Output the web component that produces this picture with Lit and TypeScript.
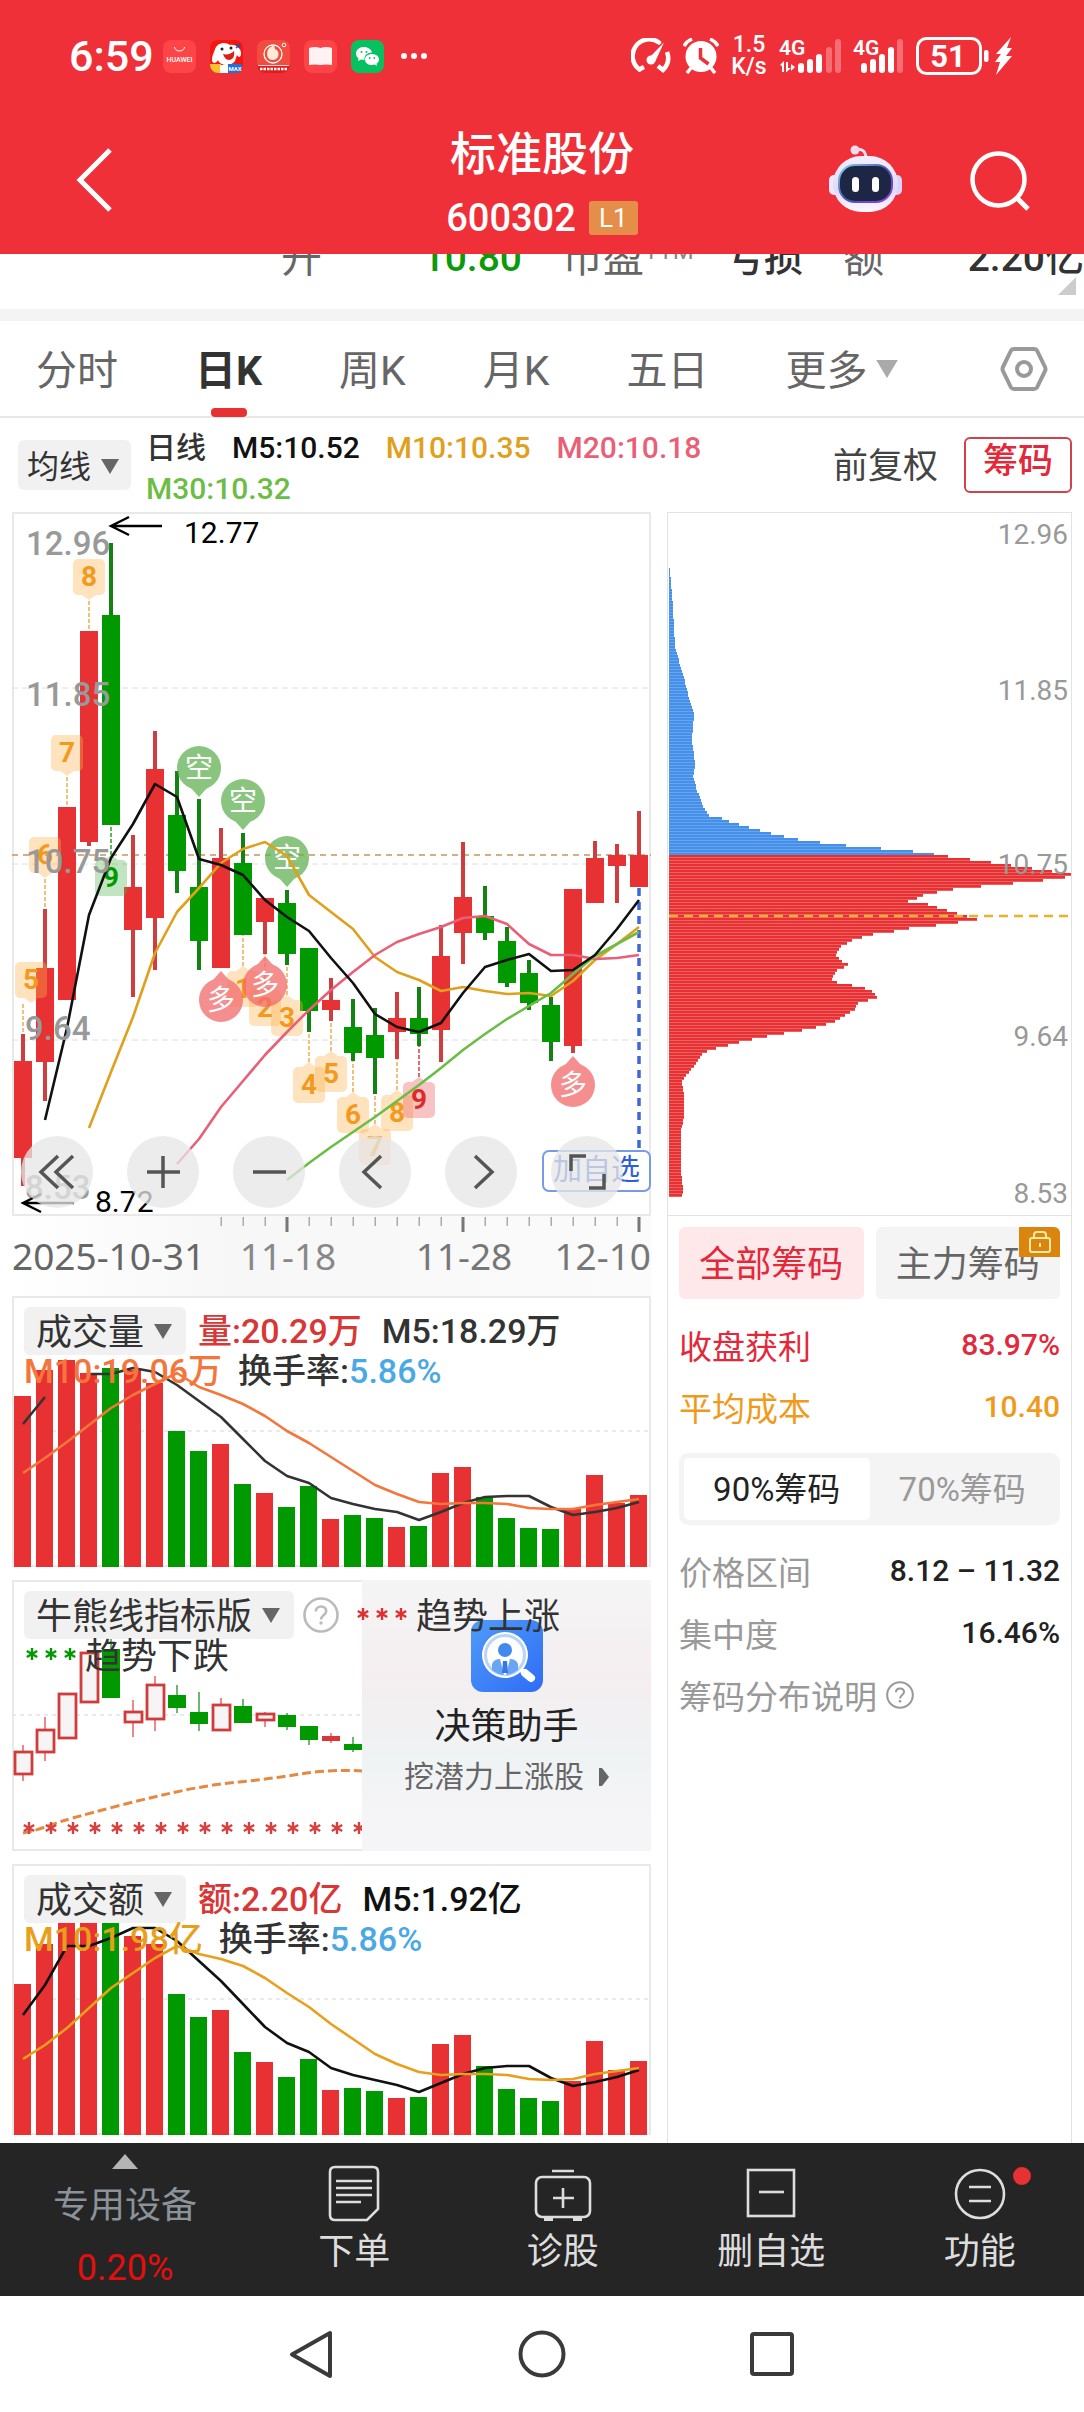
import { LitElement, html, svg, css, nothing } from "lit";
import { customElement, state } from "lit/decorators.js";

const RED = "#e73132";
const GREEN = "#009900";
const STEP = 22;
const cx = (i: number) => 11 + i * STEP;

type Candle = ["r" | "g", number, number, number, number];

// Each entry: direction, high, body top, body bottom, low.
const CANDLES: Candle[] = [
  ["r", 522, 549, 646, 674], ["r", 397, 456, 550, 589], ["r", 295, 295, 488, 488],
  ["r", 119, 119, 330, 334], ["g", 31, 103, 313, 313], ["r", 323, 375, 418, 485],
  ["r", 219, 257, 406, 458], ["g", 259, 303, 359, 381], ["g", 287, 375, 429, 458],
  ["r", 316, 346, 456, 456], ["g", 321, 351, 423, 423], ["r", 386, 386, 410, 442],
  ["g", 378, 391, 442, 453], ["g", 436, 436, 499, 520], ["r", 466, 488, 498, 509],
  ["g", 487, 515, 541, 549], ["g", 496, 523, 546, 582], ["r", 480, 506, 520, 547],
  ["g", 475, 506, 522, 534], ["r", 413, 444, 518, 550], ["r", 330, 385, 421, 452],
  ["g", 374, 404, 421, 428], ["g", 415, 429, 471, 475], ["g", 448, 461, 491, 498],
  ["g", 485, 493, 530, 549], ["r", 377, 377, 534, 541], ["r", 329, 346, 391, 391],
  ["r", 332, 343, 354, 391], ["r", 299, 343, 375, 375],
];

const AVERAGES = [
  { color: "#e0a01c", from: 3, ys: [616, 560, 505, 441, 400, 376, 351, 337, 330, 344, 383, 400, 417, 445, 460, 468, 479, 475, 479, 482, 481, 484, 469, 448, 432, 415] },
  { color: "#ea5f78", from: 7, ys: [652, 627, 595, 569, 543, 520, 498, 478, 460, 443, 430, 422, 415, 406, 404, 412, 432, 443, 443, 447, 446, 443] },
  { color: "#6cbd45", from: 12, ys: [668, 651, 635, 620, 605, 589, 573, 556, 538, 522, 507, 494, 481, 462, 444, 432, 420] },
  { color: "#111111", from: 1, ys: [608, 516, 403, 346, 312, 272, 285, 347, 353, 363, 388, 405, 419, 446, 471, 502, 515, 520, 511, 481, 455, 448, 442, 459, 458, 443, 417, 388] },
];

interface Tag { n: string; x: number; y: number; end: number; tone: "o" | "g" | "r"; dx?: number }
const TAGS_ABOVE: Tag[] = [
  { n: "5", x: cx(0), y: 450, end: 522, tone: "o", dx: 8 },
  { n: "6", x: cx(1), y: 325, end: 397, tone: "o" },
  { n: "7", x: cx(2), y: 223, end: 295, tone: "o" },
  { n: "8", x: cx(3), y: 47, end: 119, tone: "o" },
];
const TAGS_BELOW: Tag[] = [
  { n: "9", x: cx(4), y: 348, end: 313, tone: "g" },
  { n: "1", x: cx(10), y: 459, end: 423, tone: "o" },
  { n: "2", x: cx(11), y: 478, end: 442, tone: "o" },
  { n: "3", x: cx(12), y: 488, end: 453, tone: "o" },
  { n: "4", x: cx(13), y: 555, end: 520, tone: "o" },
  { n: "5", x: cx(14), y: 544, end: 509, tone: "o" },
  { n: "6", x: cx(15), y: 585, end: 549, tone: "o" },
  { n: "7", x: cx(16), y: 617, end: 582, tone: "o" },
  { n: "8", x: cx(17), y: 583, end: 547, tone: "o" },
  { n: "9", x: cx(18), y: 570, end: 534, tone: "r" },
];
const TONES = {
  o: { fill: "#fbb24a", text: "#f39a1e", dash: "#efc27c" },
  g: { fill: "#4fb84f", text: "#009900", dash: "#5cb85c" },
  r: { fill: "#ec5a5a", text: "#dd2b2b", dash: "#e26a6a" },
};

interface Flag { label: string; x: number; y: number; up: boolean }
const FLAGS: Flag[] = [
  { label: "空", x: cx(8), y: 256, up: false },
  { label: "空", x: cx(10), y: 289, up: false },
  { label: "空", x: cx(12), y: 346, up: false },
  { label: "多", x: cx(9), y: 488, up: true },
  { label: "多", x: cx(11), y: 473, up: true },
  { label: "多", x: cx(25), y: 573, up: true },
];

// Chip distribution outline as [y, width] pairs.
const CHIPS: [number, number][] = [
  [50, 0], [80, 3], [134, 6], [144, 9], [165, 15], [185, 20], [201, 25], [227, 23], [251, 26], [263, 24],
  [277, 28], [293, 34], [302, 40], [304, 50], [308, 60], [311, 70], [314, 80], [317, 91], [320, 102], [323, 115],
  [326, 129], [328, 144], [331, 166], [334, 200], [337, 237], [340, 258], [343, 279], [346, 301], [349, 322],
  [352, 342], [355, 363], [358, 383], [361, 403], [364, 396], [368, 367], [371, 332], [374, 302], [376, 284],
  [379, 268], [382, 254], [386, 246], [388, 239], [391, 259], [394, 268], [397, 278], [400, 288], [403, 298],
  [406, 308], [410, 282], [413, 260], [415, 240], [419, 220], [421, 204], [425, 189], [427, 183], [431, 176],
  [433, 172], [437, 169], [443, 166], [445, 170], [449, 174], [452, 181], [454, 175], [457, 168], [463, 164],
  [467, 163], [470, 170], [472, 183], [476, 200], [479, 205], [482, 207], [485, 209], [488, 194], [491, 187],
  [497, 186], [500, 179], [503, 174], [506, 169], [509, 164], [512, 153], [515, 144], [518, 127], [521, 109],
  [524, 92], [527, 79], [530, 66], [533, 55], [536, 43], [539, 35], [545, 30], [554, 24], [566, 14], [569, 13],
  [580, 15], [603, 15], [617, 12], [658, 12], [677, 14], [685, 13],
];
const CLOSE_Y = 343;

function chipWidth(y: number): number {
  for (let i = 1; i < CHIPS.length; i++) {
    const [y0, w0] = CHIPS[i - 1];
    const [y1, w1] = CHIPS[i];
    if (y <= y1) return Math.round(w0 + ((w1 - w0) * (y - y0)) / (y1 - y0));
  }
  return 0;
}
function chipPath(from: number, to: number, offset: number, height: number): string {
  let d = "";
  for (let y = from; y < to; y += 3) {
    const w = chipWidth(y + 1);
    if (w > 0) d += `M1 ${y + offset}h${w}v${height}H1z`;
  }
  return d;
}

const SIDES = "rrrrgrrggrgrggrggrgrrggggrrrr";
const VOLUME = {
  tops: [100, 74, 64, 77, 72, 74, 87, 135, 155, 148, 188, 197, 211, 190, 223, 219, 222, 231, 230, 177, 171, 201, 222, 232, 233, 213, 179, 207, 199],
  lines: [
    { color: "#333333", from: 0, ys: [128, 101] },
    { color: "#333333", from: 3, ys: [78, 78, 72, 76, 89, 105, 121, 143, 165, 180, 187, 202, 208, 213, 216, 224, 216, 207, 201, 200, 200, 211, 219, 216, 212, 206] },
    { color: "#f4763c", from: 0, ys: [177, 162, 146, 129, 112, 99, 88, 77, 91, 99, 108, 120, 135, 147, 161, 175, 189, 198, 206, 208, 207, 207, 208, 212, 213, 213, 209, 206, 203] },
  ],
};
const TURNOVER = {
  tops: [120, 80, 59, 54, 54, 72, 80, 130, 153, 146, 188, 198, 213, 195, 226, 224, 227, 234, 233, 180, 171, 202, 225, 234, 237, 217, 177, 206, 197],
  lines: [
    { color: "#111111", from: 0, ys: [151, 121, 82, 82, 74, 64, 64, 77, 97, 117, 140, 163, 179, 188, 204, 211, 216, 221, 228, 219, 210, 204, 202, 202, 214, 222, 218, 213, 206] },
    { color: "#e8a01c", from: 0, ys: [195, 181, 164, 144, 124, 109, 94, 82, 90, 95, 102, 114, 129, 143, 160, 175, 190, 200, 208, 211, 210, 210, 211, 215, 216, 215, 210, 207, 204] },
  ],
};

const TREND: Candle[] = [
  ["r", 165, 171, 195, 201], ["r", 137, 149, 173, 181], ["r", 113, 113, 159, 159], ["r", 72, 72, 123, 123],
  ["g", 54, 69, 118, 118], ["r", 120, 131, 143, 157], ["r", 96, 104, 140, 151], ["g", 105, 115, 128, 133],
  ["g", 112, 132, 144, 151], ["r", 118, 124, 151, 151], ["g", 119, 126, 143, 143], ["r", 132, 133, 141, 147],
  ["g", 133, 135, 147, 150], ["g", 146, 146, 160, 165], ["r", 153, 156, 161, 163], ["g", 157, 164, 170, 172],
];

const points = (from: number, ys: number[]) => ys.map((y, i) => `${cx(from + i)},${y}`).join(" ");
const line = (l: { color: string; from: number; ys: number[] }) =>
  svg`<polyline points=${points(l.from, l.ys)} fill="none" stroke=${l.color} stroke-width="2.6" stroke-linejoin="round" />`;
const star = (x: number, y: number, r: number, color: string) => {
  const a = Math.round(r * 8.7) / 10;
  const b = r / 2;
  return svg`<path d="M${x} ${y - r}v${2 * r}M${x - a} ${y - b}l${2 * a} ${2 * b}M${x - a} ${y + b}l${2 * a} ${-2 * b}" stroke=${color} stroke-width="2.4" />`;
};
const caret = html`<svg class="caret" viewBox="0 0 18 15" aria-hidden="true"><path d="M0 0h18L9 15z" fill="currentColor" /></svg>`;
const help = html`<svg viewBox="0 0 36 36" fill="none" stroke="currentColor" aria-hidden="true">
  <circle cx="18" cy="18" r="16.5" stroke-width="2.6" />
  <path d="M12.8 14.5c0-3 2.2-5 5.2-5s5.2 1.9 5.2 4.7c0 3.6-5.2 3.9-5.2 8.3" stroke-width="2.6" />
  <circle cx="18" cy="26" r="1.7" fill="currentColor" stroke="none" />
</svg>`;
const legendStars = (color: string) => html`<svg class="stars" viewBox="0 0 52 16" aria-hidden="true">
  ${[7, 26, 45].map((x) => star(x, 8, 6, color))}
</svg>`;

@customElement("app-root")
export class AppRoot extends LitElement {
  @state() private period = "日K";
  @state() private chipScope = "全部筹码";
  @state() private chipShare = "90%筹码";

  static styles = css`
    :host {
      display: block;
      min-height: 100vh;
      background: #fff;
      color: #333;
      font-family: Roboto, "Noto Sans CJK SC", sans-serif;
      font-size: 34px;
    }
    * { box-sizing: border-box; }
    button {
      margin: 0; padding: 0; border: 0; background: none;
      font: inherit; color: inherit; cursor: pointer;
    }
    a { color: inherit; text-decoration: none; }
    svg { display: block; flex: none; }
    svg text { font-family: Roboto, "Noto Sans CJK SC", sans-serif; }
    svg .date { font-family: "Noto Sans", "Noto Sans CJK SC", sans-serif; }
    .caret { width: 18px; height: 15px; margin-top: 5px; color: #666; }

    .black { color: #111; }
    .dark { color: #333; }
    .red { color: #d93636; }
    .gold { color: #e0a01c; }
    .amber { color: #e8a01c; }
    .orange { color: #f4763c; }
    .pink { color: #ea5f78; }
    .lime { color: #6cbd45; }
    .sky { color: #4aa9e4; }

    .top { background: #f03038; color: #fff; height: 254px; display: flex; flex-direction: column; }
    .status { display: flex; align-items: center; height: 112px; padding: 0 72px 0 69px; }
    .clock { font-size: 43px; font-weight: 500; width: 94px; }
    .apps { display: flex; gap: 14px; align-items: center; }
    .app { width: 33px; height: 33px; }
    .dots { width: 30px; height: 10px; margin-left: 1px; }
    .signals { margin-left: auto; display: flex; align-items: center; gap: 12px; }
    .speed { font-size: 23px; line-height: 22px; text-align: center; font-weight: 500; width: 36px; }
    .gauge { width: 40px; height: 36px; }
    .alarm { width: 36px; height: 36px; }
    .signal1 { width: 62px; height: 36px; overflow: visible; }
    .signal2 { width: 51px; height: 36px; overflow: visible; }
    .battery { width: 96px; height: 38px; }

    .title-bar { flex: 1; display: grid; grid-template-columns: 1fr auto 1fr; padding: 0 54px 0 76px; }
    .back { justify-self: start; width: 36px; height: 64px; margin-top: 36px; }
    .back svg { width: 36px; height: 64px; }
    .stock { text-align: center; margin-left: -22px; }
    .name { margin: 0; font-size: 46px; line-height: 64px; padding-top: 10px; font-weight: 500; }
    .code { display: flex; justify-content: center; align-items: center; gap: 13px; font-size: 38px; line-height: 64px; font-weight: 500; }
    .level { background: #e58e4a; border-radius: 3px; font-size: 26px; line-height: 34px; width: 49px; font-weight: 400; }
    .actions { justify-self: end; display: flex; gap: 68px; margin-top: 33px; height: 68px; }
    .robot { width: 73px; height: 68px; }
    .search { width: 60px; height: 60px; margin-top: 6px; }
    .search svg { width: 60px; height: 60px; }

    .quotes {
      position: relative; height: 55px; overflow: hidden; padding: 0 0 26px 281px;
      display: grid; grid-template-columns: repeat(3, minmax(0, 1fr)); gap: 40px; align-content: end;
      font-size: 39px; line-height: 50px; color: #666;
    }
    .quotes div { display: flex; justify-content: space-between; white-space: nowrap; }
    .quotes b { font-weight: 500; color: #333; }
    .quotes .down { color: #0a9a0a; }
    .quotes sup { font-size: 24px; line-height: 20px; color: #888; vertical-align: 13px; }
    .quotes .label { font-size: 41px; }
    .corner { position: absolute; right: 8px; bottom: 14px; width: 18px; height: 18px; }
    .band { height: 12px; background: #f4f4f4; }

    .tabs { display: flex; align-items: center; gap: 77px; height: 97px; padding: 0 36px; border-bottom: 2px solid #e8e8e8; }
    .tab { display: flex; align-items: center; gap: 8px; height: 100%; padding-bottom: 4px; font-size: 41px; color: #666; position: relative; white-space: nowrap; }
    .tab.on { color: #333; font-weight: 700; }
    .tab.on::after {
      content: ""; position: absolute; left: 0; right: 0; bottom: -1px; margin: 0 auto;
      width: 36px; height: 9px; border-radius: 4px; background: #e73132;
    }
    .tab .caret { width: 22px; height: 18px; margin-top: 4px; color: #aaa; }
    .settings { margin-left: auto; }
    .settings svg { width: 48px; height: 46px; }

    .legend-row { display: flex; align-items: center; height: 94px; padding: 0 12px 0 18px; }
    .pick { display: flex; align-items: center; gap: 10px; background: #f1f1f1; border-radius: 6px; white-space: nowrap; color: #333; padding-bottom: 3px; }
    .ma { height: 50px; padding-left: 9px; padding-right: 12px; font-size: 32px; }
    .ma-values { flex: 1; min-width: 0; display: flex; flex-wrap: wrap; column-gap: 26px; margin-left: 15px; font-size: 30px; line-height: 41px; padding-top: 5px; font-weight: 500; }
    .adjust { font-size: 35px; color: #444; margin-right: 26px; padding-bottom: 6px; }
    .chips-toggle { width: 108px; height: 56px; border: 2px solid #d0434c; border-radius: 6px; color: #e3283a; font-size: 35px; line-height: 46px; padding-bottom: 6px; font-weight: 500; }

    .main { display: grid; grid-template-columns: minmax(0, 639fr) minmax(0, 405fr); gap: 16px; padding: 0 12px; }
    .left { display: flex; flex-direction: column; padding-bottom: 8px; }
    .plot { width: 100%; height: auto; }
    .chart { display: grid; }
    .chart > * { grid-area: 1 / 1; }
    .tools { align-self: end; display: flex; justify-content: space-between; padding: 0 28px 8px 9px; }
    .tool { width: 72px; height: 72px; border-radius: 50%; background: rgba(230, 230, 230, 0.76); }
    .tool svg { width: 72px; height: 72px; }
    .add {
      align-self: end; justify-self: end; margin-bottom: 24px; width: 109px; height: 42px; border: 2px solid #7a9ae8;
      border-radius: 7px; color: #2f5fd8; font-size: 29px; line-height: 34px; padding-bottom: 2px; background: #fff;
    }
    .panels { display: flex; flex-direction: column; gap: 13px; }
    .panel { display: grid; }
    .panel > * { grid-area: 1 / 1; }
    .panel header { align-self: start; padding: 11px 0 0 12px; z-index: 1; }
    .row1 { display: flex; align-items: center; height: 48px; gap: 12px; white-space: nowrap; }
    .row1 .pick { height: 48px; padding: 0 14px 5px 12px; font-size: 36px; gap: 10px; }
    .row2 { display: flex; align-items: center; height: 32px; padding: 0 0 6px 0; white-space: nowrap; column-gap: 16px; }
    .values { display: flex; column-gap: 20px; padding-bottom: 5px; }
    .values, .row2 { font-weight: 500; }
    .trend { font-size: 36px; font-weight: 400; display: flex; align-items: center; gap: 8px; padding-bottom: 5px; }
    .stars { width: 52px; height: 16px; margin-top: 3px; }
    .help { color: #bbb; }
    .help svg { width: 36px; height: 36px; }
    .row1 .help { margin-left: -3px; }
    .help + .trend { margin-left: 5px; }
    .row2.low { height: 32px; padding: 0 0 0 1px; }
    .promo {
      justify-self: end; width: 45.2%; display: flex; flex-direction: column; align-items: center; padding-top: 40px;
      background: linear-gradient(#f5f5f6, #f4eef0 36%, #eff3f4 66%, #f5f4f7 86%);
    }
    .promo svg.logo { width: 72px; height: 72px; }
    .promo strong { font-weight: 400; font-size: 36px; line-height: 50px; color: #222; margin-top: 10px; }
    .promo span { display: flex; align-items: center; gap: 15px; font-size: 30px; line-height: 50px; color: #666; }
    .promo .play { width: 10px; height: 18px; }

    .right { border: solid #e2e2e2; border-width: 1px 1px 0; display: flex; flex-direction: column; }
    .right > svg { border-bottom: 1px solid #e2e2e2; }
    .chips { padding: 11px; font-size: 33px; }
    .scopes { display: grid; grid-template-columns: 1fr 1fr; gap: 12px; margin-bottom: 15px; }
    .scope { position: relative; height: 72px; padding-bottom: 4px; border-radius: 6px; background: #f4f4f4; color: #666; font-size: 36px; white-space: nowrap; }
    .scope.on { background: #ffe8ea; color: #e3283a; }
    .lock { position: absolute; right: 0; top: 0; width: 41px; height: 30px; }
    .rows { margin: 0; }
    .rows div, .note { display: flex; align-items: center; justify-content: space-between; height: 62px; color: #999; padding-bottom: 1px; }
    .rows dd { margin: 0; font-size: 30px; font-weight: 500; color: #222; }
    .rows .win, .rows .win dd { color: #e3283a; }
    .rows .avg, .rows .avg dd { color: #f09a1c; }
    .shares { display: grid; grid-template-columns: 1fr 1fr; height: 72px; padding: 5px; margin: 15px 0; border-radius: 9px; background: #f4f4f4; }
    .share { border-radius: 5px; color: #999; padding-bottom: 4px; }
    .share.on { background: #fff; color: #222; }
    .note { justify-content: flex-start; gap: 9px; }
    .note svg { width: 28px; height: 28px; }

    .bottom { display: grid; grid-template-columns: 6fr 5fr 5fr 5fr 5fr; height: 153px; background: #252525; color: #ddd; font-size: 36px; }
    .item { display: flex; flex-direction: column; align-items: center; padding-top: 22px; gap: 4px; line-height: 52px; white-space: nowrap; }
    .item svg { width: 58px; height: 57px; }
    .item.device { padding-top: 11px; color: #8a9399; gap: 0; line-height: 54px; }
    .item.device svg { width: 26px; height: 15px; margin-bottom: 10px; }
    .device em { font-style: normal; color: #e30f0f; line-height: 70px; }
    .icon-wrap { position: relative; }
    .dot { position: absolute; right: -22px; top: 2px; width: 18px; height: 18px; border-radius: 50%; background: #e73132; }
    .nav { display: flex; justify-content: center; align-items: flex-start; gap: 182px; height: 116px; padding: 34px 0 0; }
    .nav svg { width: 48px; height: 48px; }
  `;

  private statusBar() {
    return html`<div class="status">
      <span class="clock">6:59</span>
      <div class="apps">
        <svg class="app" viewBox="0 0 33 33"><rect width="33" height="33" rx="8" fill="#fd4548" /><path d="M11.5 7a5 4 0 0 0 10 0" fill="none" stroke="#fff" /><text x="16.5" y="22" font-size="7" fill="#fff" text-anchor="middle" font-weight="500">HUAWEI</text></svg>
        <svg class="app" viewBox="0 0 33 33">
          <rect width="33" height="33" rx="8" fill="#f5170f" />
          <path d="M0 24h11v9H8a8 8 0 0 1-8-8z" fill="#fdbf2d" /><path d="M10 25h10v8H10z" fill="#fff" />
          <path d="M5 9c2-6 10-8 15-4 6-1 12 4 11 10-1 3-3 2-4 0l-2 6c-4 6-15 5-17-1-2 4-6 4-6 0 0-5 2-7 3-11z" fill="#fff" />
          <circle cx="12" cy="9" r="1.5" fill="#222" /><circle cx="21" cy="8" r="1.5" fill="#222" />
          <path d="M13 14c4 1 8 0 11-3 1 5-1 9-5 9-3 0-5-3-6-6z" fill="#d92318" />
          <path d="M18 24h14v3a6 6 0 0 1-6 6h-8z" fill="#2371d8" /><text x="25" y="31" font-size="6" fill="#fff" text-anchor="middle" font-weight="700">MAX</text>
          <path d="M26 4l4 4m0-4l-4 4" stroke="#2d4b9b" stroke-width="1.5" />
        </svg>
        <svg class="app" viewBox="0 0 33 33">
          <rect width="33" height="33" rx="8" fill="#f14c3d" /><path d="M0 25h33a8 8 0 0 1-8 8H8a8 8 0 0 1-8-8z" fill="#e21d1d" />
          <circle cx="16" cy="14" r="9" fill="none" stroke="#fff" stroke-width="1.3" /><path d="M12 8l5-3 1 4c5 1 5 11-2 11-7 0-7-8-4-12z" fill="#ffe9d8" />
          <circle cx="27" cy="5" r="1.8" fill="none" stroke="#fff" /><path d="M1 25.5h31" stroke="#fff" stroke-width=".8" /><path d="M3 29h27" stroke="#fff" stroke-width="2.5" stroke-dasharray="2.5 1" />
        </svg>
        <svg class="app" viewBox="0 0 33 33"><rect width="33" height="33" rx="8" fill="#fd4548" /><path d="M5 8q6-2 11.5 0Q22 6 28 8v17q-6-1-11.5 0Q11 24 5 25z" fill="#fff" opacity=".93" /></svg>
        <svg class="app" viewBox="0 0 33 33">
          <rect width="33" height="33" rx="8" fill="#07c160" />
          <path d="M13 7c-5 0-8 3-8 6.5 0 2 1 3.7 2.6 5L7 21l3-1.5q2 .5 3.5.4c-.5-4.4 3-7.4 7.5-7.3C20.5 9.5 17 7 13 7z" fill="#fff" />
          <path d="M21 14c-4 0-7 2.3-7 5.4S17 25 21 25q1.3 0 2.5-.4L26 26l-.6-2.2c1.6-1 2.6-2.5 2.6-4.3 0-3.2-3-5.5-7-5.5z" fill="#fff" />
          <g fill="#07c160"><circle cx="10.5" cy="12" r="1" /><circle cx="15.5" cy="12" r="1" /><circle cx="18.7" cy="18" r=".9" /><circle cx="23.3" cy="18" r=".9" /></g>
        </svg>
        <svg class="dots" viewBox="0 0 30 10" fill="#fff"><circle cx="5" cy="5" r="3" /><circle cx="15" cy="5" r="3" /><circle cx="25" cy="5" r="3" /></svg>
      </div>
      <div class="signals">
        <svg class="gauge" viewBox="0 0 40 36" fill="none" stroke="#fff" stroke-width="4.5">
          <path d="M8.5 31.5A16.5 16.5 0 0 1 28 4.5" stroke-linecap="round" /><path d="M7 32l6-3M36 14c3 8 0 14-4 18l-5-4" />
          <circle cx="20" cy="22" r="4.5" fill="#fff" stroke="none" /><path d="M17 21L33 4.5 24 24z" fill="#fff" stroke="none" />
        </svg>
        <svg class="alarm" viewBox="0 0 36 36">
          <circle cx="18" cy="18.5" r="15.5" fill="#fff" /><path d="M1 8q3-5 8-7M35 8q-3-5-8-7M8 30l-4 5M28 30l4 5" stroke="#fff" stroke-width="3.5" fill="none" />
          <path d="M17.5 10v10l8 6" stroke="#f03038" stroke-width="3.5" fill="none" />
        </svg>
        <span class="speed">1.5<br />K/s</span>
        <svg class="signal1" viewBox="0 0 62 36" fill="#fff">
          <text x="0" y="17" font-size="21" font-weight="600">4G</text>
          <path d="M1 27l4-4v11H3v-6zM7 24h2v6h3l-5 4.5zM12 26l4 3-4 4z" />
          <rect x="19" y="25" width="6" height="10" rx="3" /><rect x="28" y="21" width="6" height="14" rx="3" /><rect x="37" y="16" width="6" height="19" rx="3" />
          <rect x="47" y="9" width="6" height="26" rx="3" opacity=".3" /><rect x="56" y="1" width="6" height="34" rx="3" opacity=".3" />
        </svg>
        <svg class="signal2" viewBox="0 0 51 36" fill="#fff">
          <text x="0" y="17" font-size="21" font-weight="600">4G</text>
          <rect x="8" y="25" width="6" height="10" rx="3" /><rect x="17" y="21" width="6" height="14" rx="3" /><rect x="26" y="16" width="6" height="19" rx="3" />
          <rect x="35" y="9" width="6" height="26" rx="3" /><rect x="44" y="1" width="6" height="34" rx="3" opacity=".3" />
        </svg>
        <svg class="battery" viewBox="0 0 96 38" fill="#fff">
          <rect x="1.5" y="1.5" width="63" height="35" rx="9" fill="none" stroke="#fff" stroke-width="3" />
          <text x="32" y="30" font-size="31" font-weight="700" text-anchor="middle">51</text>
          <rect x="68" y="13" width="4.5" height="12" rx="2" /><path d="M95 0L80 17h5l-6 8h5l-4 13 16-19h-6l6-8h-5z" />
        </svg>
      </div>
    </div>`;
  }

  private titleBar() {
    return html`<div class="title-bar">
      <button class="back" aria-label="返回"><svg viewBox="0 0 36 64" fill="none" stroke="#fff" stroke-width="5"><path d="M34 2L4 32l30 30" /></svg></button>
      <div class="stock">
        <h1 class="name">标准股份</h1>
        <div class="code"><span>600302</span><span class="level">L1</span></div>
      </div>
      <div class="actions">
        <button aria-label="智能助手">
          <svg class="robot" viewBox="0 0 73 68">
            <defs>
              <linearGradient id="shell" x1="0" y1="0" x2="0" y2="1"><stop offset="0" stop-color="#f4efff" /><stop offset=".6" stop-color="#e0dafb" /><stop offset="1" stop-color="#fdf7ff" /></linearGradient>
              <linearGradient id="visor" x1="0" y1="0" x2="1" y2="1"><stop offset="0" stop-color="#8fd8ee" /><stop offset=".5" stop-color="#4454a8" /><stop offset="1" stop-color="#9a3fe0" /></linearGradient>
            </defs>
            <path d="M27 4q10-1 10 10" fill="none" stroke="#f7dff0" stroke-width="3" /><circle cx="26" cy="5" r="4.5" fill="#f3d9ee" />
            <rect x="0" y="30" width="10" height="20" rx="5" fill="#eee8ff" /><rect x="63" y="30" width="10" height="20" rx="5" fill="#d9d2fa" />
            <rect x="4" y="11" width="65" height="56" rx="28" fill="url(#shell)" />
            <rect x="9" y="19" width="55" height="39" rx="17" fill="url(#visor)" /><rect x="11" y="21" width="51" height="35" rx="15" fill="#1e2646" />
            <rect x="23" y="32" width="7" height="15" rx="3.5" fill="#fff" /><rect x="43" y="32" width="7" height="15" rx="3.5" fill="#fff" />
          </svg>
        </button>
        <button class="search" aria-label="搜索"><svg viewBox="0 0 60 60" fill="none" stroke="#fff" stroke-width="4.5"><circle cx="28.5" cy="28.5" r="26" /><path d="M47 47l11 11" stroke-width="5" /></svg></button>
      </div>
    </div>`;
  }

  private priceChart() {
    const tag = (t: Tag, above: boolean) => {
      const c = TONES[t.tone];
      const bx = t.x + (t.dx ?? 0) - 16;
      const tip = above
        ? `M${bx + 9} ${t.y + 36}l7 5 7-5z`
        : `M${bx + 9} ${t.y}l7-5 7 5z`;
      return svg`<line x1=${t.x} x2=${t.x} y1=${above ? t.y + 42 : t.y - 5} y2=${t.end} stroke=${c.dash} stroke-width="2" stroke-dasharray="4 2" />
        <rect x=${bx} y=${t.y} width="32" height="36" rx="5" fill=${c.fill} opacity=".36" />
        <path d=${tip} fill=${c.fill} opacity=".36" />
        <text x=${bx + 16} y=${t.y + 27} font-size="28" font-weight="700" text-anchor="middle" fill=${c.text}>${t.n}</text>`;
    };
    const flag = (f: Flag) => {
      const color = f.up ? "#f26a6a" : "#63b255";
      const s = f.up ? -1 : 1;
      return svg`<g opacity=".75"><circle cx=${f.x} cy=${f.y} r="22" fill=${color} />
        <path d="M${f.x - 8} ${f.y + 20 * s}L${f.x} ${f.y + 29 * s}L${f.x + 8} ${f.y + 20 * s}z" fill=${color} /></g>
        <text x=${f.x} y=${f.y + 10} font-size="28" text-anchor="middle" fill="#fff">${f.label}</text>`;
    };
    const scale: [string, number, number][] = [["12.96", 14, 43], ["11.85", 14, 194], ["10.75", 14, 361], ["9.64", 13, 528], ["8.53", 13, 687]];
    return html`<section class="chart">
      <svg class="plot" viewBox="0 0 639 704" role="img" aria-label="日K线图">
        <rect x="1" y="1" width="637" height="702" fill="#fff" stroke="#e9e9e9" stroke-width="2" />
        ${[176, 352, 528].map((y) => svg`<line x1="0" x2="639" y1=${y} y2=${y} stroke="#dedede" stroke-dasharray="6 4" />`)}
        <line x1="0" x2="639" y1=${CLOSE_Y} y2=${CLOSE_Y} stroke="#c8945c" stroke-width="1.5" stroke-dasharray="6 5" />
        ${CANDLES.map(([side, high, top, bottom, low], i) => {
          const color = side === "r" ? RED : GREEN;
          return svg`<rect x=${cx(i) - 2} y=${high} width="4" height=${low - high} fill=${side === "r" ? "#cf3d3f" : "#138213"} />
            <rect x=${cx(i) - 9} y=${top} width="18" height=${bottom - top} fill=${color} />`;
        })}
        <line x1=${cx(28)} x2=${cx(28)} y1="376" y2="640" stroke="#3f68d6" stroke-width="3.5" stroke-dasharray="8 6" />
        ${TAGS_ABOVE.map((t) => tag(t, true))}${TAGS_BELOW.map((t) => tag(t, false))}
        ${FLAGS.map(flag)}
        ${AVERAGES.map(line)}
        ${scale.map(([t, x, y]) => svg`<text x=${x} y=${y} font-size="33" font-weight="500" fill="#999">${t}</text>`)}
        <path d="M150 14H100M117 5L99 14l18 9" fill="none" stroke="#000" stroke-width="2.4" />
        <text x="172" y="31" font-size="30" fill="#000">12.77</text>
        <path d="M62 691H12M29 682L11 691l18 9" fill="none" stroke="#000" stroke-width="2.4" />
        <text x="83" y="700" font-size="30" fill="#000">8.72</text>
      </svg>
      <button class="add">加自选</button>
      <div class="tools">
        ${[
          ["更早", "M37 20L20 36l17 16M52 20L35 36l17 16"],
          ["放大", "M20 36h33M36 20v32"],
          ["缩小", "M20 36h33"],
          ["左移", "M42 20L25 36l17 16"],
          ["右移", "M30 20l17 16-17 16"],
          ["全屏", "M35 20H20v15M38 52h15V38"],
        ].map(([label, d]) => html`<button class="tool" aria-label=${label}><svg viewBox="0 0 72 72" fill="none" stroke="#555" stroke-width="3.5"><path d=${d} /></svg></button>`)}
      </div>
    </section>`;
  }

  private dateAxis() {
    const ticks = Array.from({ length: 20 }, (_, k) => k + 9);
    const label = (x: number, anchor: string, t: string, color: string) =>
      svg`<text class="date" x=${x} y="54" font-size="37" text-anchor=${anchor} fill=${color}>${t}</text>`;
    return html`<svg class="plot" viewBox="0 0 639 80" aria-label="日期轴">
      <defs><linearGradient id="fade"><stop offset="0" stop-color="#fff" /><stop offset=".35" stop-color="#f7f7f7" /><stop offset="1" stop-color="#fbfbfb" /></linearGradient></defs>
      <rect width="639" height="80" fill="url(#fade)" />
      ${ticks.map((i) => {
        const major = (i - 12) % 8 === 0;
        return svg`<rect x=${cx(i) - (major ? 1.5 : 0.5)} y="1" width=${major ? 3 : 1.5} height=${major ? 15 : 9} fill=${major ? "#777" : "#aaa"} />`;
      })}
      ${label(0, "start", "2025-10-31", "#666")}${label(276, "middle", "11-18", "#888")}
      ${label(452, "middle", "11-28", "#777")}${label(639, "end", "12-10", "#777")}
    </svg>`;
  }

  private barPlot(data: typeof VOLUME, label: string) {
    return html`<svg class="plot" viewBox="0 0 639 271" role="img" aria-label=${label}>
      <rect x="1" y="1" width="637" height="269" fill="#fff" stroke="#e9e9e9" stroke-width="2" />
      <line x1="0" x2="639" y1="135" y2="135" stroke="#e4e4e4" stroke-width="1.5" stroke-dasharray="4 4" />
      ${data.tops.map((y, i) => svg`<rect x=${cx(i) - 9} y=${y} width="17" height=${271 - y} fill=${SIDES[i] === "r" ? RED : GREEN} />`)}
      ${data.lines.map(line)}
    </svg>`;
  }

  private barPanel(name: string, data: typeof VOLUME, first: string, m5: string, m10: string, m5Tone: string, m10Tone: string) {
    return html`<section class="panel">
      ${this.barPlot(data, name)}
      <header>
        <div class="row1">
          <button class="pick">${name}${caret}</button>
          <div class="values"><span class="red">${first}</span><span class=${m5Tone}>${m5}</span></div>
        </div>
        <div class="row2"><span class=${m10Tone}>${m10}</span><span>换手率:<span class="sky">5.86%</span></span></div>
      </header>
    </section>`;
  }

  private trendPanel() {
    return html`<section class="panel">
      <svg class="plot" viewBox="0 0 639 271" role="img" aria-label="牛熊线">
        <rect x="1" y="1" width="637" height="269" fill="#fff" stroke="#e9e9e9" stroke-width="2" />
        <line x1="0" x2="350" y1="135" y2="135" stroke="#e4e4e4" stroke-width="1.5" stroke-dasharray="4 4" />
        ${TREND.map(([side, high, top, bottom, low], i) => {
          const red = side === "r";
          const solid = !red || bottom - top < 6;
          return svg`<rect x=${cx(i) - 1} y=${high} width="2" height=${low - high} fill=${red ? "#e88" : "#6fb76f"} />
            ${solid
              ? svg`<rect x=${cx(i) - 9} y=${top} width="18" height=${bottom - top} fill=${red ? "#dc3535" : GREEN} />`
              : svg`<rect x=${cx(i) - 8} y=${top + 1} width="17" height=${bottom - top - 2} fill="#f6f4f4" stroke="#d03c3c" stroke-width="2.8" />`}`;
        })}
        <path d="M11 253Q22 251 33 247T54 240 98 228 164 212 227 202 288 194 351 191" fill="none" stroke="#e58840" stroke-width="3" stroke-dasharray="9 4" />
        ${TREND.map((_, i) => star(17 + i * STEP, 248, 6, "#d84040"))}
      </svg>
      <a class="promo" href="#assistant">
        <svg class="logo" viewBox="0 0 72 72">
          <defs><linearGradient id="logo" x1="0" y1="0" x2="1" y2="1"><stop offset="0" stop-color="#4f9bf8" /><stop offset="1" stop-color="#2f6cf6" /></linearGradient></defs>
          <rect width="72" height="72" rx="12" fill="url(#logo)" />
          <path d="M54 53l6 5" stroke="#fff" stroke-width="8" stroke-linecap="round" /><path d="M49 49l4 4" stroke="#fff" stroke-width="4" />
          <circle cx="34" cy="35" r="23" fill="#fff" /><circle cx="34" cy="35" r="19.5" fill="#fff" stroke="#b9d4fb" stroke-width="3" />
          <circle cx="34" cy="30" r="7" fill="#4289ee" /><path d="M21 50V44q2-5 8-5l5 6 5-6q6 0 8 5v6q-6 5-13 5t-13-5z" fill="#69a5f5" /><path d="M29 39l4 16h2l4-16-5 5z" fill="#fff" /><path d="M32 41h4l1 12h-6z" fill="#3478e8" />
        </svg>
        <strong>决策助手</strong>
        <span>挖潜力上涨股<svg class="play" viewBox="0 0 10 18"><path d="M0 0h3l7 9-7 9H0z" fill="#666" /></svg></span>
      </a>
      <header>
        <div class="row1">
          <button class="pick">牛熊线指标版${caret}</button>
          <button class="help" aria-label="指标说明">${help}</button>
          <span class="trend">${legendStars("#df3030")}趋势上涨</span>
        </div>
        <div class="row2 low"><span class="trend">${legendStars("#009900")}趋势下跌</span></div>
      </header>
    </section>`;
  }

  private chipColumn() {
    const scale: [string, number][] = [["12.96", 31], ["11.85", 187], ["10.75", 361], ["9.64", 533], ["8.53", 690]];
    return html`<aside class="right">
      <svg class="plot" viewBox="0 0 403 702" role="img" aria-label="筹码分布">
        <path d=${chipPath(49, 341, 0, 3)} fill="#4690ea" /><path d=${chipPath(49, 341, 2, 1)} fill="#65a4ef" />
        <path d=${chipPath(342, 684, 0, 3)} fill=${RED} /><path d=${chipPath(342, 684, 2, 1)} fill="#ee6061" />
        <path d="M1 403h401" stroke="#edb02e" stroke-width="2.4" stroke-dasharray="9 6" />
        ${scale.map(([t, y]) => svg`<text x="400" y=${y} font-size="28" text-anchor="end" fill="#999">${t}</text>`)}
      </svg>
      <div class="chips">
        <div class="scopes">
          ${["全部筹码", "主力筹码"].map((s) => html`<button class="scope ${this.chipScope === s ? "on" : ""}" @click=${() => (this.chipScope = s)}>${s}${s === "主力筹码"
            ? html`<svg class="lock" viewBox="0 0 41 30"><path d="M0 0h35a6 6 0 0 1 6 6v24H0z" fill="#db840e" /><g fill="none" stroke="#ffe9a8" stroke-width="2"><rect x="11" y="11" width="20" height="14" rx="2" /><path d="M15 11V8q0-3 3-3h6q3 0 3 3v3M21 16v4" /></g></svg>`
            : nothing}</button>`)}
        </div>
        <dl class="rows">
          <div class="win"><dt>收盘获利</dt><dd>83.97%</dd></div>
          <div class="avg"><dt>平均成本</dt><dd>10.40</dd></div>
        </dl>
        <div class="shares">
          ${["90%筹码", "70%筹码"].map((s) => html`<button class="share ${this.chipShare === s ? "on" : ""}" @click=${() => (this.chipShare = s)}>${s}</button>`)}
        </div>
        <dl class="rows">
          <div><dt>价格区间</dt><dd>8.12 – 11.32</dd></div>
          <div><dt>集中度</dt><dd>16.46%</dd></div>
        </dl>
        <a class="note" href="#chips">筹码分布说明${help}</a>
      </div>
    </aside>`;
  }

  private bottomBar() {
    const item = (label: string, icon: unknown, dot = false) => html`<button class="item">
      <span class="icon-wrap"><svg viewBox="0 0 58 57" fill="none" stroke="#ddd" stroke-width="2.6">${icon}</svg>${dot ? html`<i class="dot"></i>` : nothing}</span>
      <span>${label}</span>
    </button>`;
    return html`<nav class="bottom">
      <button class="item device"><svg viewBox="0 0 26 15"><path d="M13 0l13 15H0z" fill="#b5b5b5" /></svg><span>专用设备</span><em>0.20%</em></button>
      ${item("下单", svg`<path d="M10 2h38q5 0 5 5v37l-11 11H10q-5 0-5-5V7q0-5 5-5z" /><path d="M11 16h36M11 23h36M11 30h36M11 37h25" />`)}
      ${item("诊股", svg`<rect x="2" y="12" width="54" height="40" rx="6" /><path d="M18 6h22M29 23v20M19 33h21" /><path d="M10 54h9M39 54h9" stroke-width="4" />`)}
      ${item("删自选", svg`<rect x="6" y="5" width="46" height="46" /><path d="M17 27h25" />`)}
      ${item("功能", svg`<circle cx="29" cy="29" r="24" /><path d="M18 22h22M18 36h22" />`, true)}
    </nav>
    <div class="nav">
      <button aria-label="返回"><svg viewBox="0 0 48 48" fill="none" stroke="#3a3a3a" stroke-width="4" stroke-linejoin="round"><path d="M42 3v43L4 24.5z" /></svg></button>
      <button aria-label="主页"><svg viewBox="0 0 48 48" fill="none" stroke="#3a3a3a" stroke-width="4"><circle cx="24" cy="24" r="21.5" /></svg></button>
      <button aria-label="最近任务"><svg viewBox="0 0 48 48" fill="none" stroke="#3a3a3a" stroke-width="4"><rect x="4" y="4" width="40" height="40" rx="2" /></svg></button>
    </div>`;
  }

  render() {
    return html`
      <div class="top">${this.statusBar()}${this.titleBar()}</div>
      <div class="quotes">
        <div><span class="label">开</span><b class="down">10.80</b></div>
        <div><span class="label">市盈<sup>TTM</sup></span><b>亏损</b></div>
        <div><span class="label">额</span><b>2.20亿</b></div>
        <svg class="corner" viewBox="0 0 18 18"><path d="M18 0v18H0z" fill="#ccc" /></svg>
      </div>
      <div class="band"></div>
      <div class="tabs">
        ${["分时", "日K", "周K", "月K", "五日", "更多"].map((t) => html`<button class="tab ${this.period === t ? "on" : ""}" @click=${() => (this.period = t)}>${t}${t === "更多" ? caret : nothing}</button>`)}
        <button class="settings" aria-label="设置"><svg viewBox="0 0 48 46" fill="none" stroke="#999" stroke-width="4" stroke-linejoin="round"><path d="M14 3h20q2 0 3 1.5l8 16.5q1 2 0 4l-8 16.5q-1 1.5-3 1.5H14q-2 0-3-1.5L3 25q-1-2 0-4l8-16.5Q12 3 14 3z" /><circle cx="24" cy="23" r="7" /></svg></button>
      </div>
      <div class="legend-row">
        <button class="pick ma">均线${caret}</button>
        <div class="ma-values">
          <span>日线</span><span class="black">M5:10.52</span><span class="gold">M10:10.35</span><span class="pink">M20:10.18</span><span class="lime">M30:10.32</span>
        </div>
        <button class="adjust">前复权</button>
        <button class="chips-toggle">筹码</button>
      </div>
      <main class="main">
        <div class="left">
          ${this.priceChart()}${this.dateAxis()}
          <div class="panels">
            ${this.barPanel("成交量", VOLUME, "量:20.29万", "M5:18.29万", "M10:19.06万", "dark", "orange")}
            ${this.trendPanel()}
            ${this.barPanel("成交额", TURNOVER, "额:2.20亿", "M5:1.92亿", "M10:1.98亿", "black", "amber")}
          </div>
        </div>
        ${this.chipColumn()}
      </main>
      ${this.bottomBar()}
    `;
  }
}
